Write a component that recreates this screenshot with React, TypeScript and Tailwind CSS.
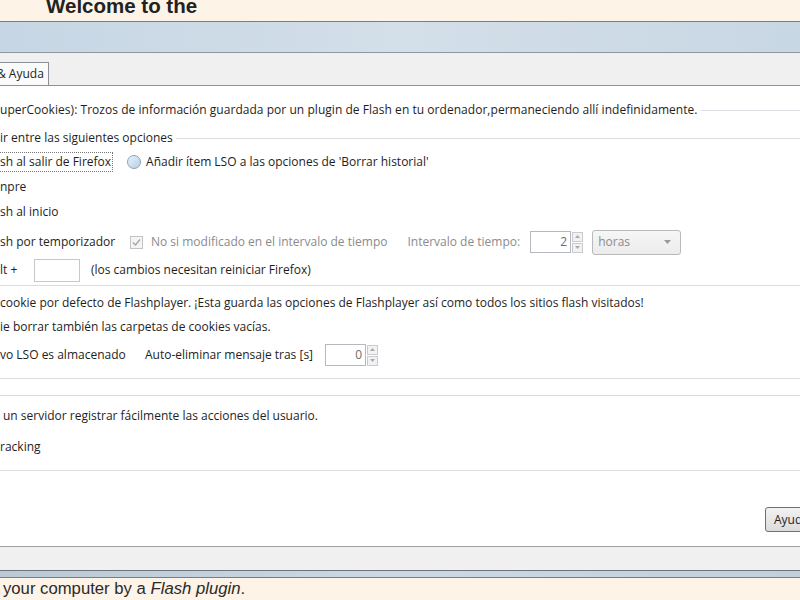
import React from "react";

const ui = { fontFamily: '"Open Sans", "Noto Sans", sans-serif' };

function GroupLine({ className = "" }: { className?: string }) {
  return <div className={`h-px bg-[#d9dde2] ${className}`} />;
}

function Spinner({ value, width }: { value: string; width: string }) {
  return (
    <div className="flex items-center">
      <div
        className={`${width} h-[22px] border border-[#b5b8bf] bg-white text-right pr-[3px] leading-[20px] text-[#6d6d6d]`}
      >
        {value}
      </div>
      <div className="flex flex-col gap-px ml-px">
        <div className="w-[11px] h-[10px] border border-[#c9cbd0] bg-[#f2f2f2] flex items-center justify-center">
          <svg width="5" height="3" viewBox="0 0 5 3">
            <path d="M0 3 L2.5 0 L5 3 Z" fill="#a9a9a9" />
          </svg>
        </div>
        <div className="w-[11px] h-[10px] border border-[#c9cbd0] bg-[#f2f2f2] flex items-center justify-center">
          <svg width="5" height="3" viewBox="0 0 5 3">
            <path d="M0 0 L2.5 3 L5 0 Z" fill="#a9a9a9" />
          </svg>
        </div>
      </div>
    </div>
  );
}

export default function App() {
  return (
    <div className="w-[800px] h-[600px] overflow-hidden bg-white flex flex-col">
      {/* page header behind the dialog */}
      <div className="h-[21px] bg-[#fdf3e6] overflow-hidden shrink-0">
        <div
          className="ml-[46px] -mt-[9px] text-[20.5px] font-bold text-[#222] whitespace-nowrap"
          style={{ fontFamily: '"Liberation Sans", Arial, sans-serif' }}
        >
          Welcome to the
        </div>
      </div>
      <div className="h-px bg-[#7d7d7d] shrink-0" />
      <div className="h-[30px] shrink-0 bg-gradient-to-r from-[#c6d6e4] via-[#d3dfe9] to-[#c8d7e4]" />
      <div className="h-px bg-[#8e969e] shrink-0" />

      {/* tab strip */}
      <div className="h-[32px] bg-[#f0f0f0] flex items-end shrink-0 overflow-hidden" style={ui}>
        <div className="w-[50px] h-[23px] -ml-px bg-[#fbfbfb] border border-b-0 border-[#8c9099] text-[12px] text-[#1e1e1e] leading-[21px] whitespace-nowrap overflow-hidden">
          <span className="-ml-[3px]">&amp; Ayuda</span>
        </div>
      </div>
      <div className="h-px bg-[#8c9099] shrink-0" />

      {/* tab panel */}
      <div className="h-[460px] shrink-0 bg-white text-[12px] text-[#1e1e1e] whitespace-nowrap" style={ui}>
        <div className="mt-[14px] h-[20px] flex items-center">
          <span className="tracking-[0.04px]">
            uperCookies): Trozos de información guardada por un plugin de Flash en tu ordenador,permaneciendo allí indefinidamente.
          </span>
          <GroupLine className="flex-1 ml-[3px]" />
        </div>

        <div className="mt-[8px] h-[20px] flex items-center">
          <span>ir entre las siguientes opciones</span>
          <GroupLine className="flex-1 ml-[3px]" />
        </div>

        <div className="mt-[4px] h-[20px] flex items-center">
          <span className="h-[20px] leading-[18px] pr-px border border-dotted border-l-0 border-[#777]">
            sh al salir de Firefox
          </span>
          <span className="ml-[14px] w-[14px] h-[14px] rounded-full border border-[#8aa2b8] bg-gradient-to-br from-[#eaf3fb] to-[#b6cfe4]" />
          <span className="ml-[5px]">Añadir ítem LSO a las opciones de 'Borrar historial'</span>
        </div>

        <div className="mt-[5px] h-[20px] flex items-center">npre</div>
        <div className="mt-[5px] h-[20px] flex items-center">sh al inicio</div>

        <div className="mt-[7px] h-[26px] flex items-center">
          <span className="w-[130px]">sh por temporizador</span>
          <span className="w-[13px] h-[13px] border border-[#c3c3c3] bg-[#f4f4f4] flex items-center justify-center">
            <svg width="9" height="9" viewBox="0 0 9 9">
              <path d="M1 4.5 L3.5 7 L8 1.5" fill="none" stroke="#a6a6a6" strokeWidth="1.4" />
            </svg>
          </span>
          <span className="ml-[8px] text-[#8b8b8b]">No si modificado en el intervalo de tiempo</span>
          <span className="ml-[20px] text-[#8b8b8b]">Intervalo de tiempo:</span>
          <span className="ml-[10px]">
            <Spinner value="2" width="w-[41px]" />
          </span>
          <div className="ml-[9px] w-[89px] h-[25px] rounded-[3px] border border-[#b9b9b9] bg-gradient-to-b from-[#f6f6f6] to-[#ececec] flex items-center justify-between pl-[5px] pr-[9px] text-[#8b8b8b]">
            <span>horas</span>
            <svg width="7" height="4" viewBox="0 0 7 4">
              <path d="M0 0 L3.5 4 L7 0 Z" fill="#9a9a9a" />
            </svg>
          </div>
        </div>

        <div className="mt-[3px] h-[24px] flex items-center">
          <span className="w-[34px]">lt +</span>
          <span className="w-[46px] h-[23px] border border-[#c5c8ce] bg-white" />
          <span className="ml-[11px]">(los cambios necesitan reiniciar Firefox)</span>
        </div>

        <GroupLine className="mt-[3px]" />

        <div className="mt-[7px] h-[20px] flex items-center">
          cookie por defecto de Flashplayer. ¡Esta guarda las opciones de Flashplayer así como todos los sitios flash visitados!
        </div>
        <div className="mt-[4px] h-[20px] flex items-center">
          ie borrar también las carpetas de cookies vacías.
        </div>
        <div className="mt-[6px] h-[24px] flex items-center">
          <span className="w-[145px]">vo LSO es almacenado</span>
          <span>Auto-eliminar mensaje tras [s]</span>
          <span className="ml-[12px]">
            <Spinner value="0" width="w-[41px]" />
          </span>
        </div>

        <GroupLine className="mt-[11px]" />
        <GroupLine className="mt-[16px]" />

        <div className="mt-[10px] h-[20px] flex items-center pl-[3px]">
          un servidor registrar fácilmente las acciones del usuario.
        </div>
        <div className="mt-[11px] h-[20px] flex items-center">racking</div>

        <GroupLine className="mt-[13px]" />

        <div className="mt-[36px] flex">
          <button className="ml-[765px] w-[75px] h-[25px] shrink-0 rounded-[3px] border border-[#707070] bg-gradient-to-b from-[#f2f2f2] to-[#dcdcdc] text-left pl-[8px] text-[12px] text-[#1e1e1e]">
            Ayuda
          </button>
        </div>
      </div>

      {/* dialog bottom + browser status */}
      <div className="h-px bg-[#a0a0a0] shrink-0" />
      <div className="h-[23px] bg-[#f0f0f0] shrink-0" />
      <div className="h-px bg-[#6f7479] shrink-0" />
      <div className="h-[6px] bg-gradient-to-r from-[#b9c9d6] via-[#ccd9e4] to-[#c1d0dc] shrink-0" />
      <div className="h-px bg-[#7c7c7c] shrink-0" />
      <div
        className="flex-1 bg-[#fdf3e6] pl-[3px] text-[16.7px] text-[#2a2a2a] leading-[22px] whitespace-nowrap"
        style={{ fontFamily: '"Liberation Sans", Arial, sans-serif' }}
      >
        your computer by a <i>Flash plugin</i>.
      </div>
    </div>
  );
}
